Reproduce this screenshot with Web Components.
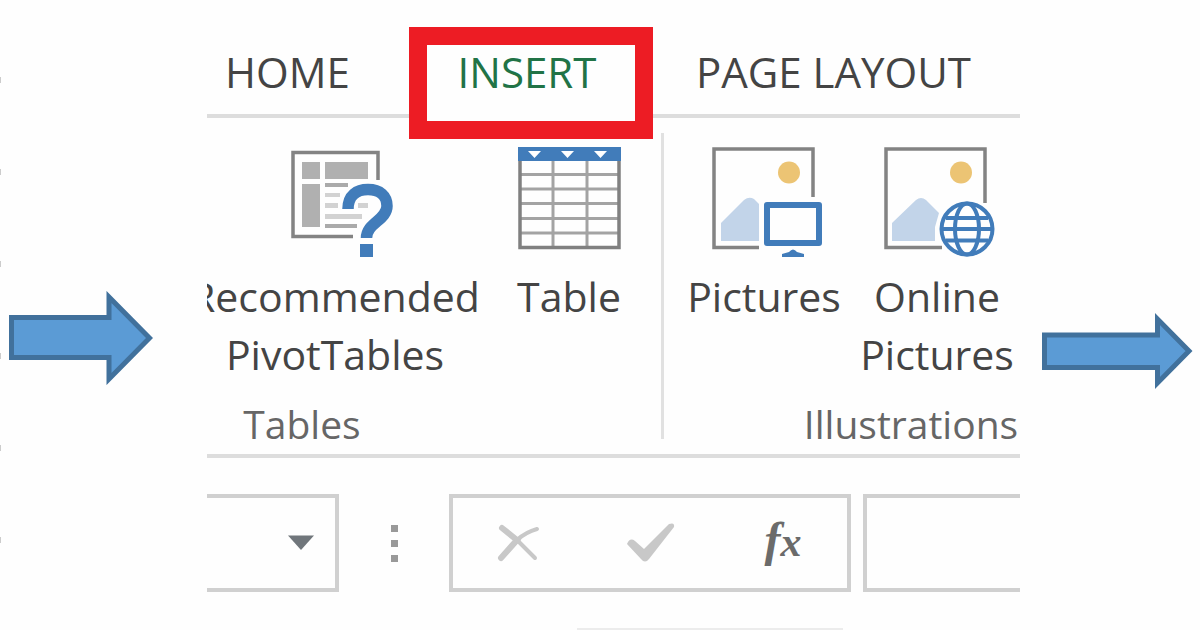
<!DOCTYPE html>
<html lang="en">
<head>
<meta charset="utf-8">
<meta name="viewport" content="width=device-width, initial-scale=1">
<title>Insert tab</title>
<style>
  html { background: #fefefe; }
  body { margin: 0; font-family: "Open Sans", "Noto Sans", sans-serif; color: #444; overflow: hidden; }
</style>
</head>
<body>
<insert-guide></insert-guide>

<script>
const define = (name, html, setup) => {
  const template = document.createElement('template');
  template.innerHTML = html;
  customElements.define(name, class extends HTMLElement {
    constructor() {
      super();
      this.attachShadow({ mode: 'open' }).append(template.content.cloneNode(true));
    }
    connectedCallback() {
      if (setup) setup(this, this.shadowRoot);
    }
  });
};

/* Block arrows that lead from one step to the next */
const arrows = {
  large: '<svg width="146" height="94" viewBox="0 0 146 94"><path d="M4.500 26.500H102V6L142.500 47L102 88V66.500H4.500Z"/></svg>',
  small: '<svg width="152" height="78" viewBox="0 0 152 78"><path d="M3.500 23H116.500V7L148 39L116.500 71V55.500H3.500Z"/></svg>'
};
define('step-arrow', `
  <style>
    :host { display: block; }
    svg { display: block; }
    path { fill: #5b9bd5; stroke: #41719c; stroke-width: 5; stroke-miterlimit: 10; }
  </style>
  <div aria-hidden="true"></div>`, (el, root) => {
  root.querySelector('div').innerHTML = arrows[el.getAttribute('size')];
});

/* Faint row marks at the edge of the previous step */
define('edge-marks', `
  <style>
    :host { display: flex; flex-direction: column; gap: 86px; padding-top: 77px; width: 1px; }
    i { height: 6px; background: #ccc; }
  </style>
  <i></i><i></i><i></i><i></i><i></i><i></i>`);

define('ribbon-tab', `
  <style>
    :host { display: block; position: relative; flex: none; }
    button { display: block; width: 100%; border: 0; background: none; margin: 0; padding: 43px 0 13px;
      font: inherit; font-size: 42px; line-height: 58px; color: inherit; text-align: left; white-space: nowrap; }
    :host([selected]) button { color: #217346; text-align: center; padding-right: 8px; }
    :host([selected])::after { content: ""; position: absolute; inset: 27px 0 -25px;
      border: 18px solid #ed1c24; box-sizing: border-box; pointer-events: none; }
    :host([selected])::before { content: ""; position: absolute; inset: auto 0 -4px; height: 4px; background: #fefefe; }
  </style>
  <button type="button" role="tab"><slot></slot></button>`);

define('ribbon-tabs', `
  <style>
    :host { display: flex; border-bottom: 4px solid #ddd; }
    .home { width: 184px; padding-left: 18px; }
    .insert { width: 244px; }
    .layout { padding-left: 43px; }
  </style>
  <ribbon-tab class="home">HOME</ribbon-tab>
  <ribbon-tab class="insert" selected>INSERT</ribbon-tab>
  <ribbon-tab class="layout">PAGE LAYOUT</ribbon-tab>`);

const icons = {
  pivot: `<svg width="120" height="120" viewBox="-2 0 120 120">
    <g fill="none" stroke="#838383" stroke-width="3.500"><path d="M101 33V5.500H16V89.500H76"/></g>
    <g fill="#b0b0b0"><path d="M25 15h18v17H25zM48 15h43v17H48zM25 37h18v43H25z"/></g>
    <path fill="#aaa" d="M48 36h23v4H48zM48 77h32v4H48z"/>
    <path fill="#d2d2d2" d="M48 46h15v4H48zM48 56h13v5H48zM81 56h10v5H81zM48 67h37v5H48z"/>
    <path fill="none" stroke="#fefefe" stroke-width="17" d="M71 62C71 48 80 42.500 91 42.500C103 42.500 110 49 110 59C110 73 89.500 76 89.500 91"/>
    <path fill="none" stroke="#417cba" stroke-width="11.500" d="M71 62C71 48 80 42.500 91 42.500C103 42.500 110 49 110 59C110 73 89.500 76 89.500 91"/>
    <path fill="#417cba" d="M83 97h13v13H83z"/></svg>`,
  table: `<svg width="104" height="120" viewBox="0 0 104 120">
    <path fill="none" stroke="#a3a3a3" stroke-width="3" d="M36 12V101M70 12V101M3 27.500H102M3 42H102M3 56.500H102M3 71.500H102M3 86H102"/>
    <path fill="none" stroke="#808080" stroke-width="3.500" d="M3 12V100.500H102V12"/>
    <path fill="#417cba" d="M1 0h103v14H1z"/>
    <path fill="#fff" d="M11 4h13l-6.500 7zM44 4h13l-6.500 7zM77 4h13l-6.500 7z"/></svg>`,
  pictures: `<svg width="120" height="120" viewBox="0 0 120 120">
    <path fill="none" stroke="#838383" stroke-width="3.500" d="M109 50V2H10V100.500H55"/>
    <circle cx="85" cy="25.500" r="11" fill="#ecc474"/>
    <path fill="#c2d4e9" d="M17 94V76L40 53Q45 49 50 52L55 57V94z"/>
    <path fill="none" stroke="#417cba" stroke-width="6" stroke-linejoin="round" d="M63 58h52v38H63z"/>
    <path fill="#417cba" d="M85 105Q89 100 93 105L100 107V110H78V107z"/></svg>`,
  online: `<svg width="120" height="120" viewBox="0 0 120 120">
    <path fill="none" stroke="#838383" stroke-width="3.500" d="M108 56V2H9V100.500H65"/>
    <circle cx="84" cy="25.500" r="11" fill="#ecc474"/>
    <path fill="#c2d4e9" d="M15 94V76L39 53Q44 49 49 53L62 66L58 80V94z"/>
    <circle cx="90" cy="82" r="30" fill="#fefefe"/>
    <g fill="none" stroke="#417cba" stroke-width="4"><circle cx="90" cy="82" r="25.500"/>
    <ellipse cx="90" cy="82" rx="12" ry="25.500"/><path d="M64 82H116M69 71H111M69 93.500H111"/></g></svg>`
};
define('ribbon-command', `
  <style>
    :host { display: block; flex: none; }
    button { display: block; width: 100%; border: 0; background: none; margin: 0; padding: 0;
      font: inherit; font-size: 41px; line-height: 58px; color: inherit; text-align: center; }
    .icon { display: flex; justify-content: center; height: 120px; }
    svg { flex: none; }
  </style>
  <button type="button"><span class="icon" aria-hidden="true"></span><slot></slot></button>`, (el, root) => {
  root.querySelector('.icon').innerHTML = icons[el.getAttribute('icon')];
});

define('ribbon-group', `
  <style>
    :host { display: flex; flex-direction: column; flex: none; box-sizing: border-box; }
    .commands { display: flex; flex: 1; }
    :host([align="end"]) .commands { justify-content: flex-end; }
    .name { font-size: 39px; line-height: 56px; color: #666; text-align: center; padding-bottom: 2px; }
  </style>
  <div class="commands"><slot></slot></div>
  <div class="name"><slot name="name"></slot></div>`);

define('ribbon-body', `
  <style>
    :host { display: flex; padding-top: 29px; border-bottom: 4px solid #ddd; height: 307px; }
    .tables { width: 718px; margin-left: -264px; }
    .separator { flex: none; width: 3px; height: 306px; margin-top: -14px; background: #e1e1e1; }
    .illustrations { width: 494px; }
    .pivot { width: 292px; }
    .table { width: 104px; margin: 0 40px 0 36px; }
    .pictures { width: 156px; margin-left: 22px; }
    .online { width: 156px; margin-left: 17px; }
  </style>
  <ribbon-group class="tables" align="end">
    <ribbon-command class="pivot" icon="pivot">Recommended PivotTables</ribbon-command>
    <ribbon-command class="table" icon="table">Table</ribbon-command>
    <span slot="name">Tables</span>
  </ribbon-group>
  <div class="separator"></div>
  <ribbon-group class="illustrations">
    <ribbon-command class="pictures" icon="pictures">Pictures</ribbon-command>
    <ribbon-command class="online" icon="online">Online Pictures</ribbon-command>
    <span slot="name">Illustrations</span>
  </ribbon-group>`);

define('formula-bar', `
  <style>
    :host { display: flex; padding-top: 36px; height: 98px; }
    .box { box-sizing: border-box; border: 4px solid #d0d0d0; flex: none; }
    .name { width: 132px; border-left: 0; display: grid; }
    .name > * { grid-area: 1 / 1; }
    select, input { appearance: none; border: 0; border-radius: 0; background: none; margin: 0; padding: 0 12px;
      font: inherit; font-size: 41px; color: inherit; width: 100%; box-sizing: border-box; }
    .name svg { place-self: center end; margin-right: 20px; pointer-events: none; }
    .grip { width: 110px; flex: none; display: flex; flex-direction: column; align-items: center; justify-content: center; gap: 8px; }
    .grip i { width: 7px; height: 7px; background: #999; }
    .actions { width: 402px; display: flex; justify-content: space-between; padding: 0 26px 0 28px; }
    button { border: 0; background: none; margin: 0; padding: 0; width: 76px; display: flex; align-items: center; justify-content: center;
      color: #6b6b6b; font: italic bold 48px/64px "Liberation Serif", serif; }
    button span { padding-bottom: 4px; }
    small { font-size: 42px; }
    .formula { flex: 1 0 0; min-width: 0; border-right: 0; margin-left: 12px; display: flex; }
  </style>
  <div class="box name">
    <select aria-label="Name box"><option></option></select>
    <svg width="28" height="16" viewBox="0 0 28 16" aria-hidden="true"><path fill="#70767b" d="M1 0.500H27L14 15z"/></svg>
  </div>
  <div class="grip"><i></i><i></i><i></i></div>
  <div class="box actions">
    <button type="button" aria-label="Cancel">
      <svg width="44" height="40" viewBox="0 0 44 40"><g fill="none" stroke="#c8c8c8" stroke-linecap="round"><path stroke-width="6" d="M5 5L20 17L4 35"/><path stroke-width="4" d="M20 17L38 35M20 17Q29 9 40 6"/></g></svg>
    </button>
    <button type="button" aria-label="Enter">
      <svg width="50" height="42" viewBox="0 0 50 42"><path fill="#c8c8c8" d="M1 22Q4 15 9 19L18 27L43 2Q49 0 48 5L23 37Q19 42 15 37z"/></svg>
    </button>
    <button type="button" aria-label="Insert function"><span>f<small>x</small></span></button>
  </div>
  <div class="box formula"><input type="text" aria-label="Formula"></div>`);

define('sheet-edge', `
  <style>
    :host { display: flex; justify-content: flex-start; padding: 36px 0 0 370px; }
    i { width: 266px; height: 2px; background: #ececec; }
  </style>
  <i></i>`);

define('excel-ribbon', `
  <style>:host { display: block; overflow: hidden; min-width: 0; }</style>
  <ribbon-tabs role="tablist"></ribbon-tabs>
  <ribbon-body></ribbon-body>
  <formula-bar></formula-bar>
  <sheet-edge></sheet-edge>`);

define('insert-guide', `
  <style>
    :host { display: grid; grid-template-columns: 207px minmax(0, 1fr) 180px; }
    .before { display: flex; gap: 6px; }
    .before step-arrow { margin-top: 291px; }
    .after step-arrow { margin: 312px 0 0 21px; }
  </style>
  <div class="before"><edge-marks></edge-marks><step-arrow size="large"></step-arrow></div>
  <excel-ribbon></excel-ribbon>
  <div class="after"><step-arrow size="small"></step-arrow></div>`);
</script>
</body>
</html>
